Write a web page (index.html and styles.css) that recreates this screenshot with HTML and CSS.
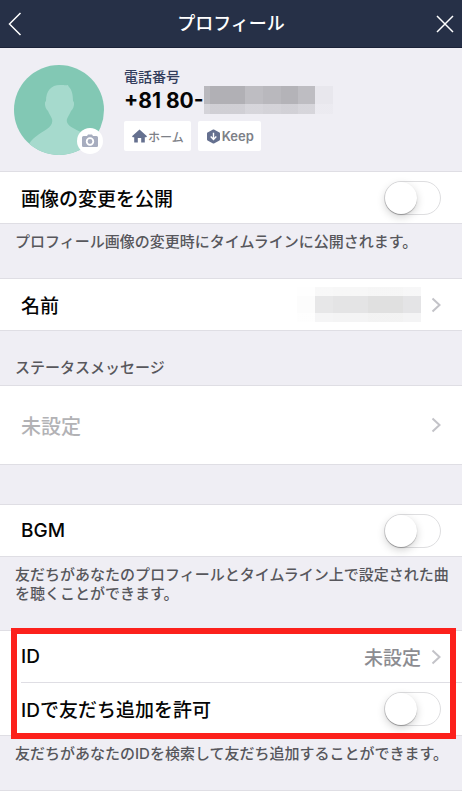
FILE: index.html
```html
<!DOCTYPE html>
<html lang="ja">
<head>
<meta charset="utf-8">
<meta name="viewport" content="width=device-width, initial-scale=1">
<title>プロフィール</title>
<link rel="stylesheet" href="styles.css">
</head>
<body>
<header class="bar">
  <button class="bar-button" type="button" aria-label="戻る"><svg width="14" height="24" viewBox="0 0 14 24"><path d="M12.5 1 1.500 12l11 11"/></svg></button>
  <h1>プロフィール</h1>
  <button class="bar-button close" type="button" aria-label="閉じる"><svg width="18" height="18" viewBox="0 0 18 18"><path d="M1 1l16 16M17 1 1 17"/></svg></button>
</header>
<main>
  <section class="profile">
    <div class="avatar">
      <svg width="90" height="90" viewBox="0 0 90 90" aria-hidden="true">
        <defs><clipPath id="disc"><circle cx="45" cy="45" r="45"/></clipPath></defs>
        <g clip-path="url(#disc)">
          <rect width="90" height="90" fill="#82c8b4"/>
          <path fill="#a6dacd" d="M46 20c4 0 6 .5 7.500 0 1 0 .5 1 1.500 2 3 3 4 8 4 14 2 1 1 8-2 10-1 3-3 5-4 8-1 4 2 7 6 9 10 5 18 10 21 16V92H14V81c3-7 11-12 19-17 4-3 6-6 5-10-1-3-3-5-4-8-3-2-4-9-2-10 0-10 5-16 14-16z"/>
        </g>
      </svg>
      <button class="camera" type="button" aria-label="写真を変更"><svg width="16" height="14" viewBox="0 0 16 14"><path fill="#a7adbf" d="M5 2l1-1.500h4L11 2h3.500q1.500 0 1.500 1.500V12q0 1-1.500 1h-13Q0 13 0 12V3.500Q0 2 1.500 2z"/><circle cx="8" cy="7.500" r="3.300" fill="#a7adbf" stroke="#fff" stroke-width="1.800"/></svg></button>
    </div>
    <div class="details">
      <p class="caption">電話番号</p>
      <p class="phone">+81 80-<span class="mask mask-phone" aria-hidden="true"><i class="m1"></i><i class="m2"></i><i class="m3"></i><i class="m4"></i><i class="m5"></i><i class="m6"></i><i class="m7"></i></span></p>
      <div class="links">
        <button class="chip" type="button"><svg width="15" height="14" viewBox="0 0 15 14"><path fill="#65708f" d="M7.500.5 15 7.300l-.8.9h-1.400V13.500H9.200V9H5.800v4.500H2.200V8.200H.8L0 7.300z"/></svg>ホーム</button>
        <button class="chip" type="button"><svg width="15" height="15" viewBox="0 0 15 15"><path fill="#65708f" stroke="#65708f" stroke-width="2" stroke-linejoin="round" d="M7.500 1.500 13 4.400v6.200l-5.500 2.900L2 10.600V4.400z"/><path fill="none" stroke="#fff" stroke-width="1.400" d="M7.500 3.800v6.400M4.700 7.500l2.800 2.900 2.800-2.900"/></svg>Keep</button>
      </div>
    </div>
  </section>

  <section class="group">
    <div class="row"><label for="publish">画像の変更を公開</label><input class="switch" type="checkbox" role="switch" id="publish"></div>
  </section>
  <p class="note">プロフィール画像の変更時にタイムラインに公開されます。</p>

  <section class="group">
    <button class="row" type="button"><span>名前</span><span class="value"><span class="mask mask-name" aria-hidden="true"><i class="n1"></i><i class="n2"></i><i class="n3"></i><i class="n4"></i><i class="n5"></i></span><svg class="chevron" width="10" height="16" viewBox="0 0 10 16"><path d="M1.500 1.500 8.500 8l-7 6.500"/></svg></span></button>
  </section>
  <h2 class="heading">ステータスメッセージ</h2>

  <section class="group">
    <button class="row tall" type="button"><span class="empty">未設定</span><svg class="chevron" width="10" height="16" viewBox="0 0 10 16"><path d="M1.500 1.500 8.500 8l-7 6.500"/></svg></button>
  </section>

  <section class="group spaced">
    <div class="row"><label for="bgm">BGM</label><input class="switch" type="checkbox" role="switch" id="bgm"></div>
  </section>
  <p class="note">友だちがあなたのプロフィールとタイムライン上で設定された曲を聴くことができます。</p>

  <section class="group marked">
    <button class="row" type="button"><span>ID</span><span class="value">未設定<svg class="chevron" width="10" height="16" viewBox="0 0 10 16"><path d="M1.500 1.500 8.500 8l-7 6.500"/></svg></span></button>
    <div class="row"><label for="allow">IDで友だち追加を許可</label><input class="switch" type="checkbox" role="switch" id="allow"></div>
  </section>
  <p class="note">友だちがあなたのIDを検索して友だち追加することができます。</p>
  <section class="group rest"></section>
</main>
</body>
</html>
```

FILE: styles.css
```css
* { box-sizing: border-box; }

body {
  margin: 0;
  min-height: 100vh;
  display: flex;
  flex-direction: column;
  background: #efeef4;
  color: #050505;
  font-family: Inter, "Noto Sans CJK JP", sans-serif;
  font-weight: 500;
}

h1, h2, p { margin: 0; }

button {
  font: inherit;
  color: inherit;
  border: 0;
  padding: 0;
  background: none;
}

svg { display: block; flex: none; }

main {
  flex: 1;
  display: flex;
  flex-direction: column;
}

.bar {
  display: grid;
  grid-template-columns: 1fr auto 1fr;
  align-items: center;
  height: 48px;
  padding: 0 8px;
  background: #263047;
  border-bottom: 1px solid #1b2238;
  color: #fff;
}

.bar h1 {
  font-size: 18px;
  line-height: 24px;
  font-weight: 500;
}

.bar-button { justify-self: start; }

.bar-button.close { justify-self: end; }

.bar-button svg {
  fill: none;
  stroke: #fff;
  stroke-width: 1.5;
}

.profile {
  display: flex;
  gap: 20px;
  padding: 17px 14px 16px;
}

.avatar {
  position: relative;
  width: 90px;
  height: 90px;
}

.camera {
  position: absolute;
  right: 1px;
  bottom: 1px;
  width: 26px;
  height: 26px;
  display: grid;
  place-items: center;
  border-radius: 50%;
  background: #fff;
}

.details { padding-top: 2px; }

.caption {
  font-size: 14px;
  line-height: 19px;
  color: #323d5c;
}

.phone {
  display: flex;
  align-items: center;
  height: 28px;
  font-size: 21px;
  font-weight: 700;
}

.mask { display: grid; }

.mask-phone {
  grid-template-columns: 6px 35px 18px 18px 17px 17px 18px;
  height: 28px;
}

.mask-phone i {
  background: linear-gradient(transparent 18px, rgba(239, 238, 244, 0.5) 18px);
}

.m1 { background-color: #b9b8bd !important; }
.m2 { background-color: #b1b0b5 !important; }
.m3 { background-color: #bebdc2 !important; }
.m4 { background-color: #b9b8bd !important; }
.m5 { background-color: #b4b3b8 !important; }
.m6 { background-color: #bebdc2 !important; }
.m7 { background-color: #e8e7ed !important; }

.links {
  display: flex;
  gap: 7px;
  margin-top: 7px;
}

.chip {
  display: flex;
  align-items: center;
  gap: 1px;
  height: 30px;
  padding: 0 7px 0 8px;
  border-radius: 2px;
  background: #fff;
  color: #7d8087;
  font-size: 12px;
}

.chip + .chip {
  font-size: 13px;
  font-weight: 600;
}

.group {
  background: #fff;
  border-top: 1px solid #dfdee4;
  border-bottom: 1px solid #dfdee4;
}

.row {
  display: flex;
  align-items: center;
  justify-content: space-between;
  width: 100%;
  height: 51px;
  padding: 0 21px;
  font-size: 19px;
  text-align: left;
}

.tall { height: 78px; }

.empty {
  font-size: 20px;
  color: #b2b2b5;
}

.value {
  display: flex;
  align-items: center;
  gap: 10px;
  color: #8c8c91;
}

.chevron {
  fill: none;
  stroke: #c3c3c8;
  stroke-width: 2;
}

.mask-name {
  grid-template-columns: 18px 18px 35px 35px 18px;
  height: 35px;
}

.mask-name i {
  background: linear-gradient(rgba(255, 255, 255, 0.7) 9px, transparent 9px, transparent 26px, rgba(255, 255, 255, 0.6) 26px);
}

.n1 { background-color: #fcfcfc !important; }
.n2 { background-color: #e7e7e8 !important; }
.n3 { background-color: #e4e4e5 !important; }
.n4 { background-color: #e0e0e0 !important; }
.n5 { background-color: #e4e4e6 !important; }

.switch {
  appearance: none;
  display: flex;
  flex: none;
  width: 57px;
  height: 34px;
  margin: 0;
  border: 1px solid #dedee0;
  border-radius: 17px;
  background: #fff;
}

.switch::before {
  content: "";
  width: 32px;
  height: 32px;
  border-radius: 50%;
  background: #fff;
  box-shadow: 0 1px 1px rgba(0, 0, 0, 0.25), 0 3px 8px rgba(0, 0, 0, 0.18);
}

.switch:checked { background: #4cd964; }
.switch:checked::before { margin-left: auto; }

.note,
.heading {
  font-size: 15px;
  line-height: 19px;
  font-weight: 500;
  color: #57575c;
}

.note { padding: 8px 10px 27px 15px; }

.heading { padding: 27px 15px 8px; }

.spaced { margin-top: 39px; }

.marked { position: relative; }

.marked .row + .row {
  height: 53px;
  background: linear-gradient(#dfdee4, #dfdee4) 21px 0 / 100% 1px no-repeat;
}

.marked::after {
  content: "";
  position: absolute;
  inset: -3px 6px -4px 11px;
  border: 6px solid #fc211c;
  pointer-events: none;
}

.rest {
  flex: 1;
  border-bottom: 0;
}
```
